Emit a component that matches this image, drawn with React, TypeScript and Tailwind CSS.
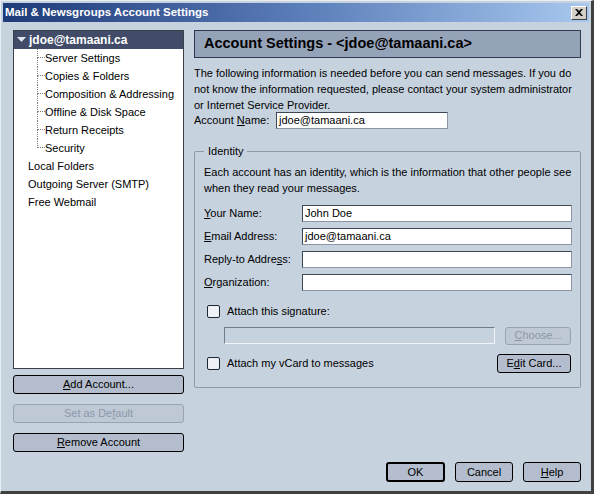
import React from 'react';

const font = "font-['Liberation_Sans',Arial,sans-serif]";

const Btn = ({
  children,
  w,
  disabled,
  isDefault,
}: {
  children: React.ReactNode;
  w: string;
  disabled?: boolean;
  isDefault?: boolean;
}) => (
  <div
    className={`${w} flex items-center justify-center rounded-[3px] text-[11px] ${
      disabled
        ? 'border border-[#98a3b4] bg-[#bfc9d6] text-[#8d98a8]'
        : isDefault
        ? 'border-2 border-black bg-[#b4bdcd] text-black'
        : 'border border-black bg-[#b4bdcd] text-black'
    }`}
  >
    {children}
  </div>
);

const Field = ({ value, w }: { value?: string; w: string }) => (
  <div
    className={`${w} h-[17px] bg-white border border-[#8c96a6] border-t-[#3e4756] border-l-[#3e4756] px-[2px] text-[11px] leading-[15px] text-black`}
  >
    {value}
  </div>
);

const Check = () => (
  <div className="w-[13px] h-[13px] rounded-[2px] border border-[#1e2533] bg-[#eef2f6]" />
);

const children = [
  'Server Settings',
  'Copies & Folders',
  'Composition & Addressing',
  'Offline & Disk Space',
  'Return Receipts',
  'Security',
];

const App = () => {
  return (
    <div
      className={`${font} w-[594px] h-[494px] bg-[#c6d2de] border-l border-t border-[#e8eef4] border-r-[3px] border-b-[3px] border-r-[#404040] border-b-[#404040] flex flex-col overflow-hidden text-[11px] text-black`}
    >
      {/* title bar */}
      <div className="mx-[2px] mt-[2px] h-[19px] flex items-center justify-between bg-gradient-to-r from-[#1f3a78] via-[#5a7cb8] to-[#a8c8ee] pl-[2px] pr-[2px]">
        <span className="text-white font-bold text-[11.5px]">Mail &amp; Newsgroups Account Settings</span>
        <div className="w-[16px] h-[14px] bg-[#d4d0c8] border border-[#fff] border-r-[#404040] border-b-[#404040] flex items-center justify-center">
          <svg width="8" height="7" viewBox="0 0 8 7">
            <path d="M0 0 L2 0 L4 2 L6 0 L8 0 L5 3.5 L8 7 L6 7 L4 5 L2 7 L0 7 L3 3.5 Z" fill="#000" />
          </svg>
        </div>
      </div>

      <div className="flex gap-[10px] pl-[12px] pr-[9px] pt-[8px]">
        {/* left column */}
        <div className="w-[171px] flex flex-col">
          <div className="h-[339px] bg-white border border-[#3a3f48] flex flex-col">
            <div className="h-[18px] bg-[#424c68] flex items-center gap-[3px] pl-[3px]">
              <svg width="9" height="6" viewBox="0 0 9 6">
                <path d="M0 0 L9 0 L4.5 5 Z" fill="#dfe5ee" />
              </svg>
              <span className="text-white font-bold text-[12px]">jdoe@tamaani.ca</span>
            </div>
            {children.map((c, i) => (
              <div key={c} className="h-[18px] flex items-stretch pl-[23px]">
                <div className="w-[8px] flex flex-col">
                  <div className="h-[9px] border-l border-b border-dotted border-[#7a7a7a]" />
                  <div className={`h-[9px] ${i < children.length - 1 ? 'border-l border-dotted border-[#7a7a7a]' : ''}`} />
                </div>
                <span className="self-center">{c}</span>
              </div>
            ))}
            {['Local Folders', 'Outgoing Server (SMTP)', 'Free Webmail'].map((t) => (
              <div key={t} className="h-[18px] flex items-center pl-[14px]">
                {t}
              </div>
            ))}
          </div>
          <div className="mt-[6px] flex flex-col gap-[10px]">
            <Btn w="w-[171px] h-[19px]">
              <span><u>A</u>dd Account...</span>
            </Btn>
            <Btn w="w-[171px] h-[19px]" disabled>
              <span>Set as De<u>f</u>ault</span>
            </Btn>
            <Btn w="w-[171px] h-[19px]">
              <span><u>R</u>emove Account</span>
            </Btn>
          </div>
        </div>

        {/* right column */}
        <div className="w-[387px] flex flex-col">
          <div className="h-[28px] bg-[#95a3b8] border border-[#2e3850] flex items-center pl-[9px]">
            <span className="font-bold text-[14.5px]">Account Settings - &lt;jdoe@tamaani.ca&gt;</span>
          </div>
          <p className="mt-[7px] leading-[16px]">
            The following information is needed before you can send messages. If you do not know the information requested, please contact your system administrator or Internet Service Provider.
          </p>
          <div className="-mt-[1px] flex items-center">
            <span className="w-[82px]">Account <u>N</u>ame:</span>
            <Field w="w-[172px]" value="jdoe@tamaani.ca" />
          </div>

          {/* identity group */}
          <div className="mt-[22px] h-[237px] border border-[#8e9aab] rounded-[2px] flex flex-col pl-[9px] pr-[2px]">
            <div className="-mt-[8px] self-start bg-[#c6d2de] px-[4px] leading-[14px]">Identity</div>
            <p className="mt-[6px] leading-[16px]">
              Each account has an identity, which is the information that other people see when they read your messages.
            </p>
            <div className="mt-[9px] flex flex-col gap-[6px]">
              {[
                [<><u>Y</u>our Name:</>, 'John Doe'],
                [<><u>E</u>mail Address:</>, 'jdoe@tamaani.ca'],
                [<>Reply-to Addre<u>s</u>s:</>, ''],
                [<><u>O</u>rganization:</>, ''],
              ].map(([label, v], i) => (
                <div key={i} className="flex items-center">
                  <span className="w-[98px]">{label}</span>
                  <Field w="w-[270px]" value={v as string} />
                </div>
              ))}
            </div>
            <div className="mt-[12px] flex items-center gap-[7px] pl-[3px]">
              <Check />
              <span>Attach this signature:</span>
            </div>
            <div className="mt-[7px] flex items-center pl-[20px] gap-[10px]">
              <div className="w-[271px] h-[17px] border border-[#717c8c] border-b-[#f0f4f8] border-r-[#f0f4f8] bg-[#c6d2de]" />
              <Btn w="w-[66px] h-[18px]" disabled>
                <span><u>C</u>hoose...</span>
              </Btn>
            </div>
            <div className="mt-[9px] flex items-center pl-[3px] pr-[7px]">
              <div className="flex items-center gap-[7px] flex-1">
                <Check />
                <span>Attach my vCard to messages</span>
              </div>
              <Btn w="w-[74px] h-[19px]">
                <span>E<u>d</u>it Card...</span>
              </Btn>
            </div>
          </div>
        </div>
      </div>

      <div className="flex-1" />
      <div className="flex justify-end gap-[10px] pr-[10px] pb-[9px]">
        <Btn w="w-[59px] h-[20px]" isDefault>
          OK
        </Btn>
        <Btn w="w-[58px] h-[20px]">Cancel</Btn>
        <Btn w="w-[58px] h-[20px]">
          <span><u>H</u>elp</span>
        </Btn>
      </div>
    </div>
  );
};

export default App;
